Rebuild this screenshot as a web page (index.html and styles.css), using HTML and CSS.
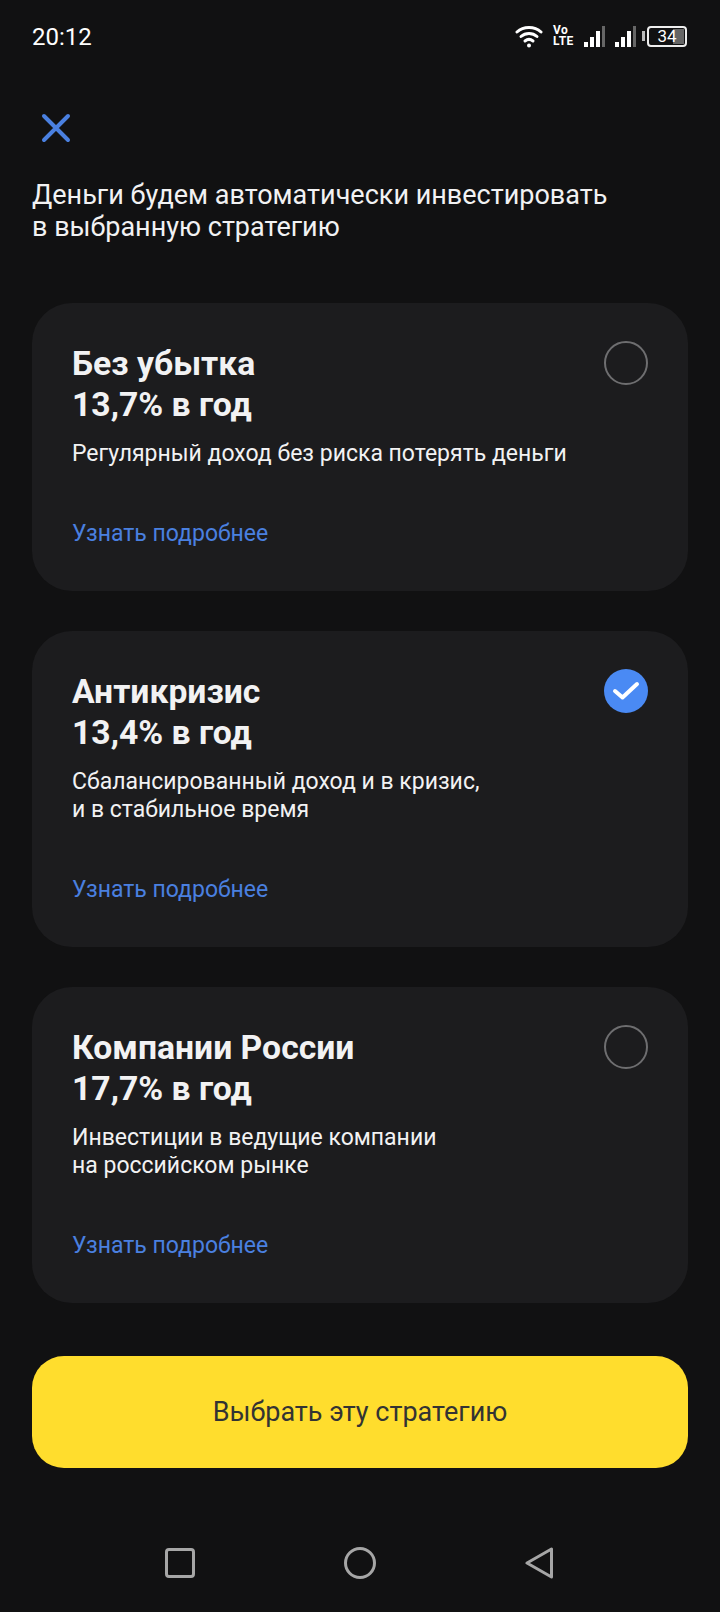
FILE: index.html
```html
<!DOCTYPE html>
<html>
<head>
  <title>Стратегия</title>
  <meta charset="utf-8" />
  <link rel="stylesheet" href="styles.css">
</head>
<body>
  <div class="status">
    <span class="time">20:12</span>
    <div class="status-icons">
      <svg width="28" height="24" viewBox="0 0 28 24" fill="none" stroke="#fff" stroke-width="3" stroke-linecap="round">
        <path d="M2 8C8.500 2 19.500 2 26 8"/>
        <path d="M6 12.500C10.500 8.500 17.500 8.500 22 12.500"/>
        <path d="M10 17C12.500 15 15.500 15 18 17"/>
        <circle cx="14" cy="21.500" r="2" fill="#fff" stroke="none"/>
      </svg>
      <div class="volte"><span>Vo</span><span>LTE</span></div>
      <svg width="21" height="21" viewBox="0 0 21 21">
        <rect x="0" y="16" width="4" height="5" fill="#fff"/>
        <rect x="6" y="11" width="4" height="10" fill="#fff"/>
        <rect x="12" y="5" width="4" height="16" fill="#fff"/>
        <rect x="18" y="0" width="3" height="21" fill="#666"/>
      </svg>
      <svg width="21" height="21" viewBox="0 0 21 21">
        <rect x="0" y="16" width="4" height="5" fill="#fff"/>
        <rect x="6" y="11" width="4" height="10" fill="#fff"/>
        <rect x="12" y="5" width="4" height="16" fill="#fff"/>
        <rect x="18" y="0" width="3" height="21" fill="#666"/>
      </svg>
      <div class="battery-wrap">
        <span class="battery-tip"></span>
        <div class="battery"><span class="battery-fill"></span><span class="battery-num">34</span></div>
      </div>
    </div>
  </div>

  <div class="close">
    <svg width="30" height="30" viewBox="0 0 30 30" fill="none" stroke="#4a80e0" stroke-width="4" stroke-linecap="round">
      <path d="M3 3L27 27M27 3L3 27"/>
    </svg>
  </div>

  <p class="intro">Деньги будем автоматически инвестировать<br>в выбранную стратегию</p>

  <div class="cards">
    <div class="card card-short">
      <div class="radio"></div>
      <h2>Без убытка<br>13,7% в год</h2>
      <p>Регулярный доход без риска потерять деньги</p>
      <a class="more">Узнать подробнее</a>
    </div>
    <div class="card">
      <div class="radio radio-on">
        <svg width="28" height="22" viewBox="0 0 28 22" fill="none" stroke="#fff" stroke-width="4" stroke-linecap="round" stroke-linejoin="round">
          <path d="M3 11L10.500 17.500L25 4"/>
        </svg>
      </div>
      <h2>Антикризис<br>13,4% в год</h2>
      <p>Сбалансированный доход и в кризис,<br>и в стабильное время</p>
      <a class="more">Узнать подробнее</a>
    </div>
    <div class="card">
      <div class="radio"></div>
      <h2>Компании России<br>17,7% в год</h2>
      <p>Инвестиции в ведущие компании<br>на российском рынке</p>
      <a class="more">Узнать подробнее</a>
    </div>
  </div>

  <button class="pick">Выбрать эту стратегию</button>

  <div class="nav">
    <svg width="30" height="30" viewBox="0 0 30 30" fill="none" stroke="#a6a6a6" stroke-width="3">
      <rect x="1.500" y="1.500" width="27" height="27" rx="2.500"/>
    </svg>
    <svg width="34" height="34" viewBox="0 0 34 34" fill="none" stroke="#a6a6a6" stroke-width="3">
      <circle cx="17" cy="17" r="14.500"/>
    </svg>
    <svg width="28" height="34" viewBox="0 0 28 34" fill="none" stroke="#a6a6a6" stroke-width="3" stroke-linejoin="round">
      <path d="M26.500 3V31L2 17Z"/>
    </svg>
  </div>
</body>
</html>
```

FILE: styles.css
```css
body {
  font-family: Roboto, "Noto Sans", sans-serif;
  background-color: #111112;
  color: #f2f2f3;
  margin: 0;
  width: 720px;
  height: 1612px;
  overflow: hidden;
}
.status {
  display: flex;
  justify-content: space-between;
  align-items: center;
  height: 72px;
  padding: 0 33px 0 32px;
}
.time {
  font-size: 24px;
  color: #fff;
  padding-top: 1px;
}
.status-icons {
  display: flex;
  align-items: center;
  gap: 10px;
}
.volte {
  display: flex;
  flex-direction: column;
  width: 21px;
  font-size: 12px;
  font-weight: 700;
  line-height: 11px;
  letter-spacing: 0.5px;
  color: #fff;
}
.battery-wrap {
  display: flex;
  align-items: center;
  gap: 2px;
  margin-left: -4px;
}
.battery-tip {
  width: 3px;
  height: 10px;
  background-color: #bbb;
}
.battery {
  position: relative;
  width: 40px;
  height: 21px;
  box-sizing: border-box;
  border: 2px solid #eee;
  border-radius: 4px;
  display: flex;
  align-items: center;
  justify-content: center;
}
.battery-fill {
  position: absolute;
  top: 1px;
  right: 1px;
  bottom: 1px;
  width: 11px;
  background-color: #666;
}
.battery-num {
  position: relative;
  font-size: 17px;
  color: #fff;
}
.close {
  display: flex;
  height: 30px;
  margin: 41px 0 0 41px;
}
.intro {
  font-size: 27px;
  line-height: 32px;
  margin: 36px 0 0 32px;
}
.cards {
  display: flex;
  flex-direction: column;
  gap: 40px;
  margin: 60px 32px 0;
}
.card {
  position: relative;
  background-color: #1c1c1e;
  border-radius: 40px;
  height: 316px;
  padding: 40px 40px 0;
  box-sizing: border-box;
}
.card-short {
  height: 288px;
}
.card h2 {
  font-size: 33.700px;
  line-height: 41px;
  font-weight: 700;
  margin: 0;
}
.card p {
  font-size: 23px;
  line-height: 28px;
  margin: 15px 0 0;
}
.more {
  position: absolute;
  left: 40px;
  bottom: 43px;
  font-size: 23px;
  line-height: 28px;
  color: #4a80e0;
}
.radio {
  position: absolute;
  top: 38px;
  right: 40px;
  width: 44px;
  height: 44px;
  box-sizing: border-box;
  border: 2px solid #6e6e70;
  border-radius: 50%;
}
.radio-on {
  border: 0;
  background-color: #4a8af4;
  display: flex;
  align-items: center;
  justify-content: center;
}
.pick {
  display: block;
  width: 656px;
  height: 112px;
  margin: 53px 32px 0;
  border: 0;
  border-radius: 32px;
  background-color: #ffdd2d;
  color: #333;
  font-family: inherit;
  font-size: 27px;
}
.nav {
  display: flex;
  align-items: center;
  gap: 148px;
  margin-top: 78px;
  padding-left: 165px;
}
```
